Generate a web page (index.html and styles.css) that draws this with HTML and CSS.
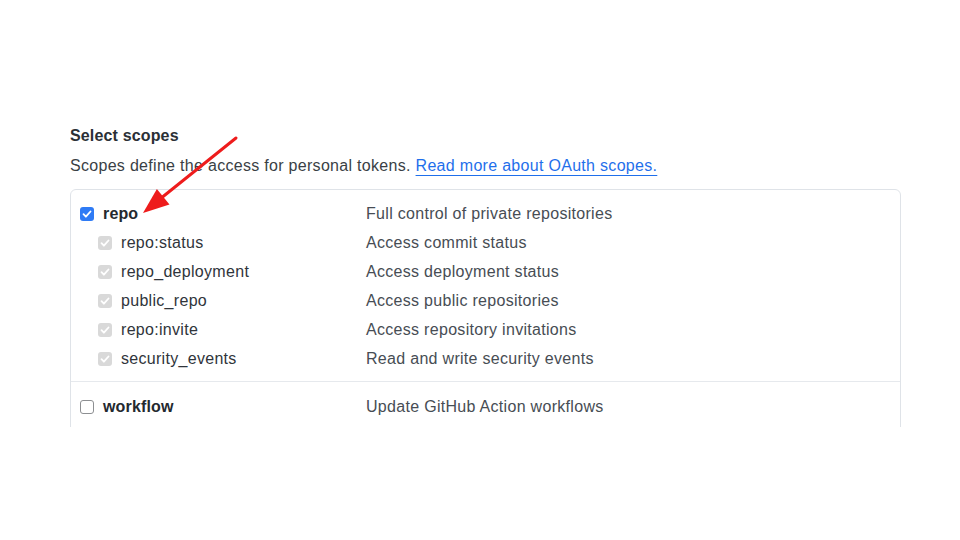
FILE: index.html
```html
<!DOCTYPE html>
<html lang="en">
<head>
  <meta charset="UTF-8">
  <meta name="viewport" content="width=device-width, initial-scale=1.0">
  <title>Select scopes</title>
  <link rel="stylesheet" href="styles.css">
</head>
<body>
  <div class="page">
    <h2 class="title">Select scopes</h2>
    <p class="note">Scopes define the access for personal tokens. <a href="#">Read more about OAuth scopes.</a></p>

    <!-- Lista de escopos (cortada na parte de baixo) -->
    <div class="scopes-clip">
      <div class="scopes">
        <div class="group">
          <div class="row">
            <span class="check on"><svg viewBox="0 0 14 14"><path d="M3.5 7.2l2.4 2.5 4.6-5.2"/></svg></span>
            <span class="name main">repo</span>
            <span class="desc">Full control of private repositories</span>
          </div>
          <div class="row sub">
            <span class="check off"><svg viewBox="0 0 14 14"><path d="M3.5 7.2l2.4 2.5 4.6-5.2"/></svg></span>
            <span class="name">repo:status</span>
            <span class="desc">Access commit status</span>
          </div>
          <div class="row sub">
            <span class="check off"><svg viewBox="0 0 14 14"><path d="M3.5 7.2l2.4 2.5 4.6-5.2"/></svg></span>
            <span class="name">repo_deployment</span>
            <span class="desc">Access deployment status</span>
          </div>
          <div class="row sub">
            <span class="check off"><svg viewBox="0 0 14 14"><path d="M3.5 7.2l2.4 2.5 4.6-5.2"/></svg></span>
            <span class="name">public_repo</span>
            <span class="desc">Access public repositories</span>
          </div>
          <div class="row sub">
            <span class="check off"><svg viewBox="0 0 14 14"><path d="M3.5 7.2l2.4 2.5 4.6-5.2"/></svg></span>
            <span class="name">repo:invite</span>
            <span class="desc">Access repository invitations</span>
          </div>
          <div class="row sub">
            <span class="check off"><svg viewBox="0 0 14 14"><path d="M3.5 7.2l2.4 2.5 4.6-5.2"/></svg></span>
            <span class="name">security_events</span>
            <span class="desc">Read and write security events</span>
          </div>
        </div>
        <div class="group">
          <div class="row">
            <span class="check empty"></span>
            <span class="name main">workflow</span>
            <span class="desc">Update GitHub Action workflows</span>
          </div>
        </div>
      </div>
    </div>
  </div>

  <!-- Seta vermelha apontando para "repo" -->
  <svg class="arrow" viewBox="0 0 960 540" width="960" height="540">
    <line x1="236" y1="138" x2="160" y2="199" stroke="#ee1c1c" stroke-width="3" stroke-linecap="round"/>
    <polygon points="143,213 169.5,204.5 156.9,188.9" fill="#ee1c1c"/>
  </svg>
</body>
</html>
```

FILE: styles.css
```css
/* Estilo geral */
body {
  margin: 0;
  background: #fff;
  font-family: "Liberation Sans", Arial, sans-serif;
  color: #24292f;
  width: 960px;
  height: 540px;
  position: relative;
  overflow: hidden;
}

.page {
  padding: 126px 0 0 70px;
  width: 831px;
}

.title {
  margin: 0;
  font-size: 16px;
  line-height: 20px;
  font-weight: bold;
  letter-spacing: 0.15px;
  color: #2b3036;
}

.note {
  margin: 10px 0 13px;
  font-size: 16px;
  line-height: 20px;
  letter-spacing: 0.3px;
  color: #3a3f45;
}

.note a {
  color: #1f6feb;
  text-decoration: underline;
  text-underline-offset: 4px;
  text-decoration-thickness: 1px;
}

/* Caixa de escopos */
.scopes-clip {
  height: 238px;
  overflow: hidden;
}

.scopes {
  border: 1px solid #dfe3e8;
  border-radius: 6px;
  padding-bottom: 40px;
}

.group {
  padding: 9px 0 8px;
}

.group + .group {
  border-top: 1px solid #e6e9ed;
  padding-top: 10px;
}

.row {
  display: grid;
  grid-template-columns: 14px 1fr 534px;
  column-gap: 9px;
  align-items: center;
  height: 29px;
  padding-left: 9px;
  font-size: 16px;
  letter-spacing: 0.3px;
}

.row.sub {
  padding-left: 27px;
}

.name {
  color: #30353b;
}

.name.main {
  font-weight: bold;
  letter-spacing: 0.15px;
  color: #24292f;
}

.desc {
  color: #474d54;
}

/* Checkboxes */
.check {
  width: 14px;
  height: 14px;
  border-radius: 3px;
  box-sizing: border-box;
  display: block;
}

.check svg {
  display: block;
  width: 14px;
  height: 14px;
  fill: none;
  stroke: #fff;
  stroke-width: 1.8;
  stroke-linecap: round;
  stroke-linejoin: round;
}

.check.on {
  background: #2f7bf5;
}

.check.off {
  background: #d9d9d9;
}

.check.empty {
  background: #fff;
  border: 1px solid #8d8f92;
}

/* Seta */
.arrow {
  position: absolute;
  top: 0;
  left: 0;
  pointer-events: none;
}
```
